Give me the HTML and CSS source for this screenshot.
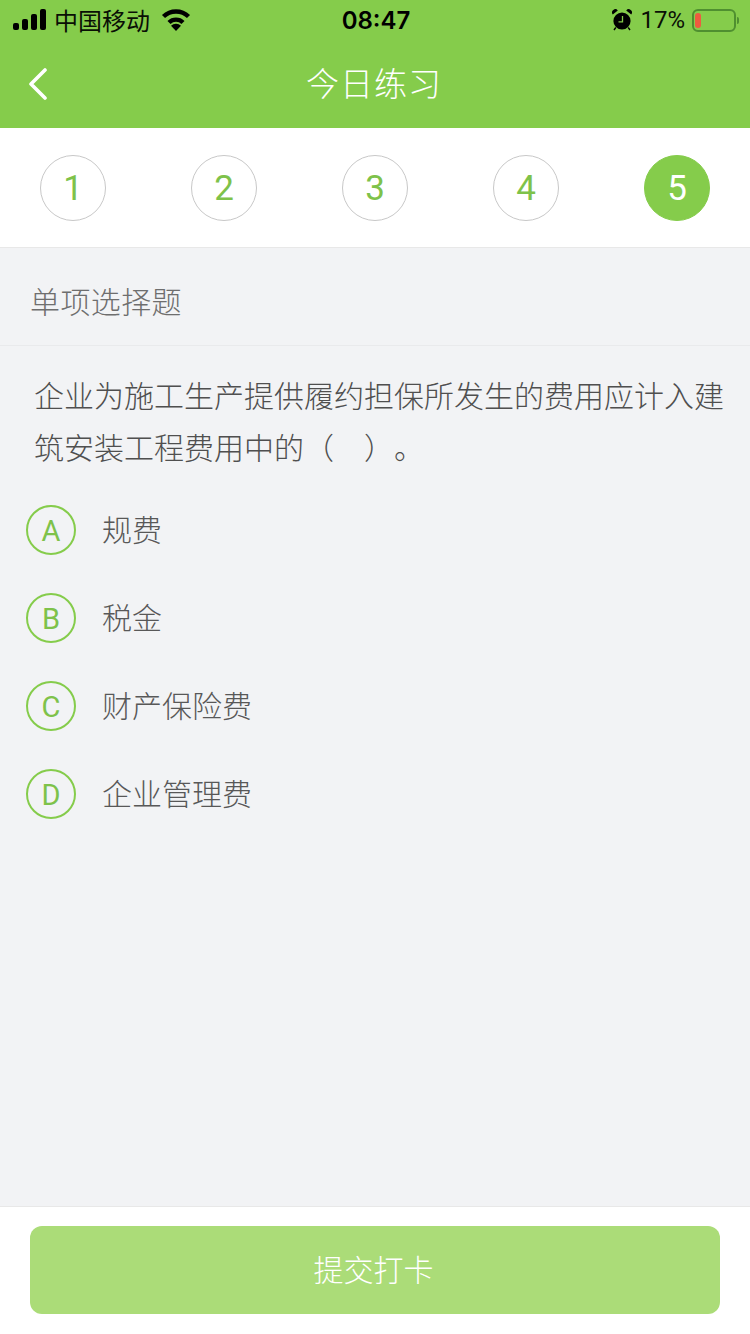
FILE: index.html
```html
<!DOCTYPE html>
<html lang="zh-CN">
<head>
<meta charset="utf-8">
<title>今日练习</title>
<link rel="stylesheet" href="styles.css">
</head>
<body>
<div class="page">
  <header class="header">
    <div class="status">
      <div class="status-side">
        <svg class="signal" width="34" height="22" viewBox="0 0 34 22"><rect x="0" y="14" width="6" height="7" rx="2"/><rect x="9" y="10" width="6" height="11" rx="2"/><rect x="18" y="5" width="6" height="16" rx="2"/><rect x="27" y="0" width="6" height="21" rx="2"/></svg>
        <span class="carrier">中国移动</span>
        <svg class="wifi" width="30" height="22" viewBox="0 0 30 22"><path class="wifi-arc" d="M2.5 7.5a18 18 0 0 1 25 0"/><path class="wifi-arc" d="M8 13.5a10 10 0 0 1 14 0"/><path d="M15 22l-5-5.2a7 7 0 0 1 10 0z"/></svg>
      </div>
      <span class="time">08:47</span>
      <div class="status-side status-right">
        <svg class="alarm" width="20" height="22" viewBox="0 0 20 22"><circle cx="10" cy="12" r="8.6"/><path d="M0.8 5.5a3.2 3.2 0 0 1 5-4zM19.2 5.5a3.2 3.2 0 0 0-5-4z"/><path class="alarm-leg" d="M3.8 18.5L2 21M16.2 18.5l1.8 2.5"/><path class="alarm-hand" d="M10.5 7v5.8H6.5"/></svg>
        <span class="percent">17%</span>
        <div class="battery"><div class="battery-level"></div></div>
        <div class="battery-cap"></div>
      </div>
    </div>
    <div class="nav">
      <svg class="back" width="20" height="32" viewBox="0 0 20 32"><path d="M17 2L3 16l14 14"/></svg>
      <h1 class="title">今日练习</h1>
    </div>
  </header>

  <nav class="steps">
    <div class="step">1</div>
    <div class="step">2</div>
    <div class="step">3</div>
    <div class="step">4</div>
    <div class="step step-active">5</div>
  </nav>

  <main class="content">
    <div class="type">单项选择题</div>
    <p class="question">企业为施工生产提供履约担保所发生的费用应计入建筑安装工程费用中的（　）。</p>
    <ul class="options">
      <li class="option"><span class="letter">A</span><span class="option-text">规费</span></li>
      <li class="option"><span class="letter">B</span><span class="option-text">税金</span></li>
      <li class="option"><span class="letter">C</span><span class="option-text">财产保险费</span></li>
      <li class="option"><span class="letter">D</span><span class="option-text">企业管理费</span></li>
    </ul>
  </main>

  <footer class="footer">
    <button class="submit" type="button">提交打卡</button>
  </footer>
</div>
</body>
</html>
```
FILE: styles.css
```css
* { box-sizing: border-box; }
html, body { margin: 0; padding: 0; }
body {
  font-family: "Noto Sans CJK SC", "Liberation Sans", sans-serif;
  background: #f2f3f5;
}
.page {
  width: 750px;
  height: 1334px;
  display: flex;
  flex-direction: column;
  overflow: hidden;
}
.header { background: #85cc4b; height: 128px; flex: none; }
.status {
  height: 40px;
  display: grid;
  grid-template-columns: 1fr auto 1fr;
  align-items: center;
  padding: 0 11px 0 13px;
  color: #0a0f05;
}
.status-side { display: flex; align-items: center; }
.status-right { justify-content: flex-end; }
.signal { margin-right: 8px; fill: #000; }
.carrier { margin-left: -1px; font-size: 24px; line-height: 40px; width: 96px; white-space: nowrap; }
.wifi { margin-left: 11px; fill: #000; }
.wifi-arc { fill: none; stroke: #000; stroke-width: 4.4; }
.time {
  font-family: Inter, "Liberation Sans", sans-serif;
  font-size: 24px;
  font-weight: 600;
  color: #000;
}
.alarm { fill: #000; margin-right: 8px; }
.alarm-leg { fill: none; stroke: #000; stroke-width: 1.4; }
.alarm-hand { fill: none; stroke: #85cc4b; stroke-width: 1.3; }
.percent {
  font-family: Roboto, "Liberation Sans", sans-serif;
  font-size: 24px;
  margin-right: 7px;
}
.battery {
  width: 44px;
  height: 23px;
  border: 2px solid #4f8f30;
  border-radius: 6px;
  padding: 2px 1px;
}
.battery-level { width: 6px; height: 15px; border-radius: 3px; background: #ee5b3f; }
.battery-cap {
  width: 2px;
  height: 7px;
  margin-left: 1px;
  background: #4f8f30;
  border-radius: 0 2px 2px 0;
}
.nav {
  height: 88px;
  position: relative;
  display: flex;
  align-items: center;
  justify-content: center;
}
.back {
  position: absolute;
  left: 28px;
  top: 28px;
  fill: none;
  stroke: #fff;
  stroke-width: 3.6;
  stroke-linecap: round;
  stroke-linejoin: round;
}
.title {
  margin: 0;
  padding: 0 2px 4px 0;
  font-size: 33px;
  font-weight: 300;
  letter-spacing: 1px;
  color: #fff;
  line-height: 44px;
}
.steps {
  flex: none;
  height: 120px;
  background: #fff;
  border-bottom: 1px solid #e8e8e8;
  display: flex;
  justify-content: space-between;
  align-items: flex-start;
  padding: 27px 40px 0;
}
.step {
  width: 66px;
  height: 66px;
  border: 1px solid #c8c8c8;
  border-radius: 50%;
  display: flex;
  align-items: center;
  justify-content: center;
  font-family: Roboto, "Liberation Sans", sans-serif;
  font-size: 35px;
  font-weight: 400;
  color: #7ec24a;
}
.step-active { background: #85cc4b; border-color: #85cc4b; color: #fff; }
.content { flex: 1; min-height: 0; color: #666; }
.type {
  height: 98px;
  border-bottom: 1px solid #e9eaec;
  padding-left: 30px;
  font-size: 30px;
  font-weight: 300;
  letter-spacing: 0.4px;
  line-height: 105px;
  color: #6e6e6e;
  white-space: nowrap;
}
.question {
  margin: 0;
  padding: 22px 20px 0 34px;
  font-size: 30px;
  font-weight: 300;
  line-height: 52px;
  color: #4f4f4f;
  text-spacing-trim: space-all;
  font-kerning: none;
}
.options {
  list-style: none;
  margin: 33px 0 0;
  padding: 0 0 0 26px;
  display: flex;
  flex-direction: column;
  gap: 38px;
}
.option {
  height: 50px;
  display: flex;
  align-items: center;
  gap: 26px;
  font-size: 30px;
  font-weight: 300;
  color: #585858;
}
.option-text { margin-top: -4px; }
.letter {
  width: 50px;
  height: 50px;
  flex: none;
  border: 2px solid #85cc4b;
  border-radius: 50%;
  display: flex;
  align-items: center;
  justify-content: center;
  padding-top: 2px;
  font-family: Roboto, "Liberation Sans", sans-serif;
  font-size: 29px;
  font-weight: 400;
  color: #7ec24a;
}
.footer {
  flex: none;
  height: 128px;
  background: #fff;
  border-top: 1px solid #e8e8e8;
  padding: 19px 30px 20px;
}
.submit {
  display: block;
  width: 100%;
  height: 88px;
  border: 0;
  border-radius: 12px;
  background: #abdc78;
  color: #fff;
  font-family: inherit;
  font-size: 30px;
  font-weight: 300;
  padding: 0 3px 4px 0;
}
```
